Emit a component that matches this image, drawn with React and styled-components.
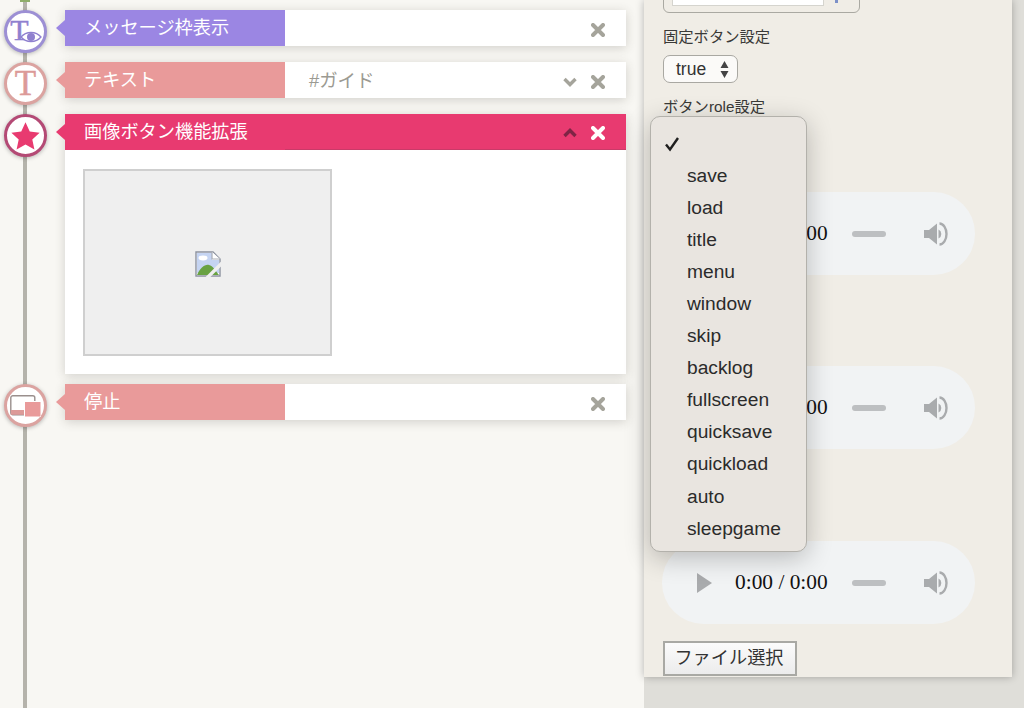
import React from "react";
import styled, { createGlobalStyle } from "styled-components";

const Global = createGlobalStyle`
  html, body { margin: 0; padding: 0; height: 708px; overflow: hidden; background: #dfded9; }
  * { box-sizing: border-box; }
`;

const FONT = `"Liberation Sans", "Noto Sans CJK JP", sans-serif`;

const tones = {
  purple: { label: "#9b86e3", edge: "#8f7fd0", ring: "#9c8fd4", ink: "#8f80cf" },
  rose: { label: "#e99a9a", edge: "#dc8f8f", ring: "#dba3a0", ink: "#dc9a98" },
  hot: { label: "#e83a70", edge: "#c93a68", ring: "#b44a75", ink: "#e83a70" },
};

const Page = styled.div`
  display: flex;
  width: 1024px;
  height: 708px;
  overflow: hidden;
  font-family: ${FONT};
`;

const Timeline = styled.main`
  position: relative;
  width: 644px;
  height: 708px;
  flex: none;
  padding: 10px 18px 0 4px;
  display: flex;
  flex-direction: column;
  background: #f8f7f3;
  &::before {
    content: "";
    position: absolute;
    left: 23px;
    top: 0;
    bottom: 0;
    width: 4px;
    background: #b5b3ab;
  }
`;

const GreenStub = styled.div`
  position: absolute;
  left: 20px;
  top: 0;
  width: 10px;
  height: 2px;
  background: #8fae6a;
`;

const Block = styled.section`
  position: relative;
  display: flex;
  align-items: flex-start;
  margin-bottom: ${(p) => p.$gap}px;
`;

const Node = styled.div`
  flex: none;
  width: 43px;
  height: 43px;
  margin: 0 18px -7px 0;
  border-radius: 50%;
  border: 3px solid ${(p) => tones[p.$tone].ring};
  background: #fff;
  box-shadow: 0 1px 4px rgba(0, 0, 0, 0.28);
  display: flex;
  align-items: center;
  justify-content: center;
  position: relative;
`;

const SerifT = styled.span`
  font-family: "Liberation Serif", serif;
  font-size: ${(p) => p.$size}px;
  line-height: 1;
  color: ${(p) => p.$color};
  -webkit-text-stroke: 0.5px ${(p) => p.$color};
  position: relative;
  left: ${(p) => p.$shift}px;
  top: ${(p) => p.$lift}px;
`;

const EyeBadge = styled.svg`
  position: absolute;
  left: 13px;
  top: 17px;
`;

const Card = styled.div`
  flex: 1;
  min-width: 0;
  background: #fff;
  box-shadow: 0 2px 10px rgba(60, 55, 45, 0.2);
`;

const Head = styled.div`
  display: flex;
  align-items: center;
  height: 36px;
  background: ${(p) => (p.$open ? tones[p.$tone].label : "#fff")};
  border-bottom: ${(p) => (p.$open ? `1px solid ${tones[p.$tone].edge}` : "none")};
`;

const Label = styled.div`
  position: relative;
  flex: none;
  width: 220px;
  height: 36px;
  padding: 0 0 4px 19px;
  display: flex;
  align-items: center;
  color: #fff;
  font-size: 18.2px;
  background: ${(p) => tones[p.$tone].label};
  &::before {
    content: "";
    position: absolute;
    left: -9px;
    top: 10px;
    border-style: solid;
    border-width: 8px 9px 8px 0;
    border-color: transparent ${(p) => tones[p.$tone].label} transparent transparent;
  }
`;

const Summary = styled.div`
  flex: 1;
  padding: 0 0 3px 24px;
  color: #9b9a92;
  font-size: 18.4px;
`;

const Actions = styled.div`
  flex: none;
  display: flex;
  align-items: center;
  gap: 14px;
  padding: 3px 21px 0 0;
`;

const Body = styled.div`
  height: 224px;
  padding: 19px 18px 0;
`;

const Thumb = styled.div`
  width: 249px;
  height: 187px;
  padding-top: 3px;
  background: #efefef;
  border: 2px solid #cfcfcf;
  display: flex;
  align-items: center;
  justify-content: center;
`;

const Side = styled.div`
  flex: 1;
  height: 708px;
`;

const Panel = styled.aside`
  position: relative;
  display: flow-root;
  width: 368px;
  height: 677px;
  padding: 0 0 0 19px;
  background: #f0ede6;
  box-shadow: 0 0 8px rgba(0, 0, 0, 0.28);
`;

const TopField = styled.div`
  width: 197px;
  height: 30px;
  margin-top: -17px;
  padding: 0 0 6px 8px;
  border: 1px solid #aaa9a2;
  border-radius: 6px;
  display: flex;
  align-items: flex-end;
`;

const TopInput = styled.div`
  width: 152px;
  height: 100%;
  background: #fff;
  border: 1px solid #d5d4ce;
`;

const TopArrow = styled.span`
  align-self: flex-start;
  width: 3px;
  height: 3px;
  margin: 16px 0 0 11px;
  background: #7c90c8;
`;

const FieldLabel = styled.div`
  margin-top: ${(p) => p.$top}px;
  height: 20px;
  line-height: 20px;
  color: #3a3a38;
  font-size: 15.3px;
`;

const SelectBox = styled.div`
  width: 75px;
  height: 28px;
  margin-top: 8px;
  padding: 0 8px 0 12px;
  display: flex;
  align-items: center;
  justify-content: space-between;
  background: #fbfaf8;
  border: 1px solid #a9a8a2;
  border-radius: 7px;
  color: #333;
  font-size: 17.5px;
`;

const Player = styled.div`
  width: 313px;
  height: 83px;
  margin-top: ${(p) => p.$top}px;
  margin-left: -1px;
  padding: 0 27px 0 35px;
  display: flex;
  align-items: center;
  background: #f1f3f4;
  border-radius: 42px;
`;

const Time = styled.span`
  margin-left: 23px;
  font-family: "Liberation Serif", serif;
  font-size: 21.4px;
  color: #111;
  white-space: nowrap;
`;

const Track = styled.span`
  width: 34px;
  height: 6px;
  margin-left: 24px;
  border-radius: 3px;
  background: #bdbfc1;
`;

const Volume = styled.svg`
  margin-left: auto;
`;

const FileButton = styled.button`
  display: block;
  width: 134px;
  height: 35px;
  margin-top: 17px;
  padding: 0 2px 5px 0;
  border: 2px solid #a9a9a4;
  border-radius: 0;
  background: linear-gradient(#fbfbfb, #ececec);
  color: #333;
  font-family: ${FONT};
  font-size: 18.2px;
`;

const Menu = styled.ul`
  position: absolute;
  left: 6px;
  top: 116px;
  width: 157px;
  height: 436px;
  margin: 0;
  padding: 10.5px 0 0;
  list-style: none;
  background: #e9e5e0;
  border: 1px solid #b3b1ab;
  border-radius: 10px;
  box-shadow: 0 6px 26px rgba(0, 0, 0, 0.24);
`;

const MenuItem = styled.li`
  position: relative;
  height: 32.1px;
  line-height: 32.1px;
  padding-left: 36px;
  color: #2b2b2b;
  font-size: 19.2px;
`;

const Tick = styled.svg`
  position: absolute;
  left: 13px;
  top: 8px;
`;

const Close = ({ color = "#a5a49b" }) => (
  <svg width="14" height="14" viewBox="0 0 14 14">
    <path d="M2 2 L12 12 M12 2 L2 12" stroke={color} strokeWidth="4" strokeLinecap="round" fill="none" />
  </svg>
);

const Chevron = ({ up, color }) => (
  <svg width="14" height="10" viewBox="0 0 14 10">
    <path d={up ? "M1.5 8 L7 2.5 L12.5 8" : "M1.5 2 L7 7.5 L12.5 2"} stroke={color} strokeWidth="3.4" fill="none" />
  </svg>
);

const Broken = () => (
  <svg width="26" height="26" viewBox="0 0 26 26">
    <path d="M1 1 H18 L25 8 V25 H1 Z" fill="#fff" stroke="#8d93a0" strokeWidth="1.4" />
    <path d="M2 2 H17 V9 H24 V22 H2 Z" fill="#c5d4f2" />
    <path d="M17 1 V8 H25" fill="#fff" stroke="#a9adb5" strokeWidth="1.2" />
    <ellipse cx="8" cy="7" rx="4.5" ry="2.4" fill="#fff" />
    <path d="M2 24 C5 17 10 13 14 14 C18 15 20 19 24 24 Z" fill="#69a242" />
    <path d="M11 28 L27 12" stroke="#efefef" strokeWidth="3.4" />
  </svg>
);

const PlayIcon = () => (
  <svg width="15" height="20" viewBox="0 0 15 20">
    <path d="M0 0 L15 10 L0 20 Z" fill="#a9abad" />
  </svg>
);

const VolumeIcon = () => (
  <Volume width="24" height="24" viewBox="0 0 24 24">
    <path d="M0 8 H5 L13 1.5 V22.5 L5 16 H0 Z" fill="#a9abad" />
    <path d="M14.5 7.5 A5 5 0 0 1 14.5 16.5 Z" fill="#a9abad" />
    <path d="M15.5 1.5 A7 10.5 0 0 1 15.5 22.5" stroke="#a9abad" strokeWidth="2.4" fill="none" />
  </Volume>
);

const AudioPlayer = ({ top }) => (
  <Player $top={top}>
    <PlayIcon />
    <Time>0:00 / 0:00</Time>
    <Track />
    <VolumeIcon />
  </Player>
);

const options = ["save", "load", "title", "menu", "window", "skip", "backlog", "fullscreen", "quicksave", "quickload", "auto", "sleepgame"];

export default function App() {
  return (
    <Page>
      <Global />
      <Timeline>
        <GreenStub />
        <Block $gap={16}>
          <Node $tone="purple">
            <SerifT $size={30} $color={tones.purple.ink} $shift={-6} $lift={-2}>T</SerifT>
            <EyeBadge width="22" height="14" viewBox="0 0 22 14">
              <path d="M1 7 C6 1 16 1 21 7 C16 13 6 13 1 7 Z" fill="#fff" stroke="#8f80cf" strokeWidth="1.3" />
              <circle cx="11" cy="7" r="4" fill="#8f80cf" />
            </EyeBadge>
          </Node>
          <Card>
            <Head $tone="purple">
              <Label $tone="purple">メッセージ枠表示</Label>
              <Summary />
              <Actions><Close /></Actions>
            </Head>
          </Card>
        </Block>

        <Block $gap={16}>
          <Node $tone="rose">
            <SerifT $size={35} $color={tones.rose.ink} $shift={0} $lift={0}>T</SerifT>
          </Node>
          <Card>
            <Head $tone="rose">
              <Label $tone="rose">テキスト</Label>
              <Summary>#ガイド</Summary>
              <Actions>
                <Chevron color="#a5a49b" />
                <Close />
              </Actions>
            </Head>
          </Card>
        </Block>

        <Block $gap={10}>
          <Node $tone="hot">
            <svg width="31" height="30" viewBox="0 0 35 34">
              <path d="M17.5 1.5 L22.3 12 L33.5 13.2 L25.2 21 L27.6 32.2 L17.5 26.6 L7.4 32.2 L9.8 21 L1.5 13.2 L12.7 12 Z" fill="#e83a70" />
            </svg>
          </Node>
          <Card>
            <Head $tone="hot" $open>
              <Label $tone="hot">画像ボタン機能拡張</Label>
              <Summary />
              <Actions>
                <Chevron up color="#7e2445" />
                <Close color="#fff" />
              </Actions>
            </Head>
            <Body>
              <Thumb><Broken /></Thumb>
            </Body>
          </Card>
        </Block>

        <Block $gap={0}>
          <Node $tone="rose">
            <svg width="31" height="22" viewBox="0 0 31 22">
              <rect x="0.8" y="0.8" width="24" height="19" rx="2" fill="#fff" stroke="#9a8f8d" strokeWidth="1.4" />
              <rect x="0.8" y="15" width="24" height="4.8" fill="#dc9a98" />
              <rect x="14.5" y="6.5" width="16.5" height="15.5" fill="#e99a9a" stroke="#fff" strokeWidth="1" />
            </svg>
          </Node>
          <Card>
            <Head $tone="rose">
              <Label $tone="rose">停止</Label>
              <Summary />
              <Actions><Close /></Actions>
            </Head>
          </Card>
        </Block>
      </Timeline>

      <Side>
        <Panel>
          <TopField>
            <TopInput />
            <TopArrow />
          </TopField>
          <FieldLabel $top={14}>固定ボタン設定</FieldLabel>
          <SelectBox>
            true
            <svg width="9" height="19" viewBox="0 0 9 19">
              <path d="M4.5 1 L8.5 8 H0.5 Z M4.5 18 L0.5 11 H8.5 Z" fill="#444" />
            </svg>
          </SelectBox>
          <FieldLabel $top={14}>ボタンrole設定</FieldLabel>
          <AudioPlayer top={75} />
          <AudioPlayer top={91} />
          <AudioPlayer top={92} />
          <FileButton>ファイル選択</FileButton>
          <Menu>
            <MenuItem>
              <Tick width="16" height="16" viewBox="0 0 16 16">
                <path d="M2 8.5 L6 13.5 L14 2" stroke="#1f1f1f" strokeWidth="2.4" fill="none" />
              </Tick>
            </MenuItem>
            {options.map((o) => (
              <MenuItem key={o}>{o}</MenuItem>
            ))}
          </Menu>
        </Panel>
      </Side>
    </Page>
  );
}
